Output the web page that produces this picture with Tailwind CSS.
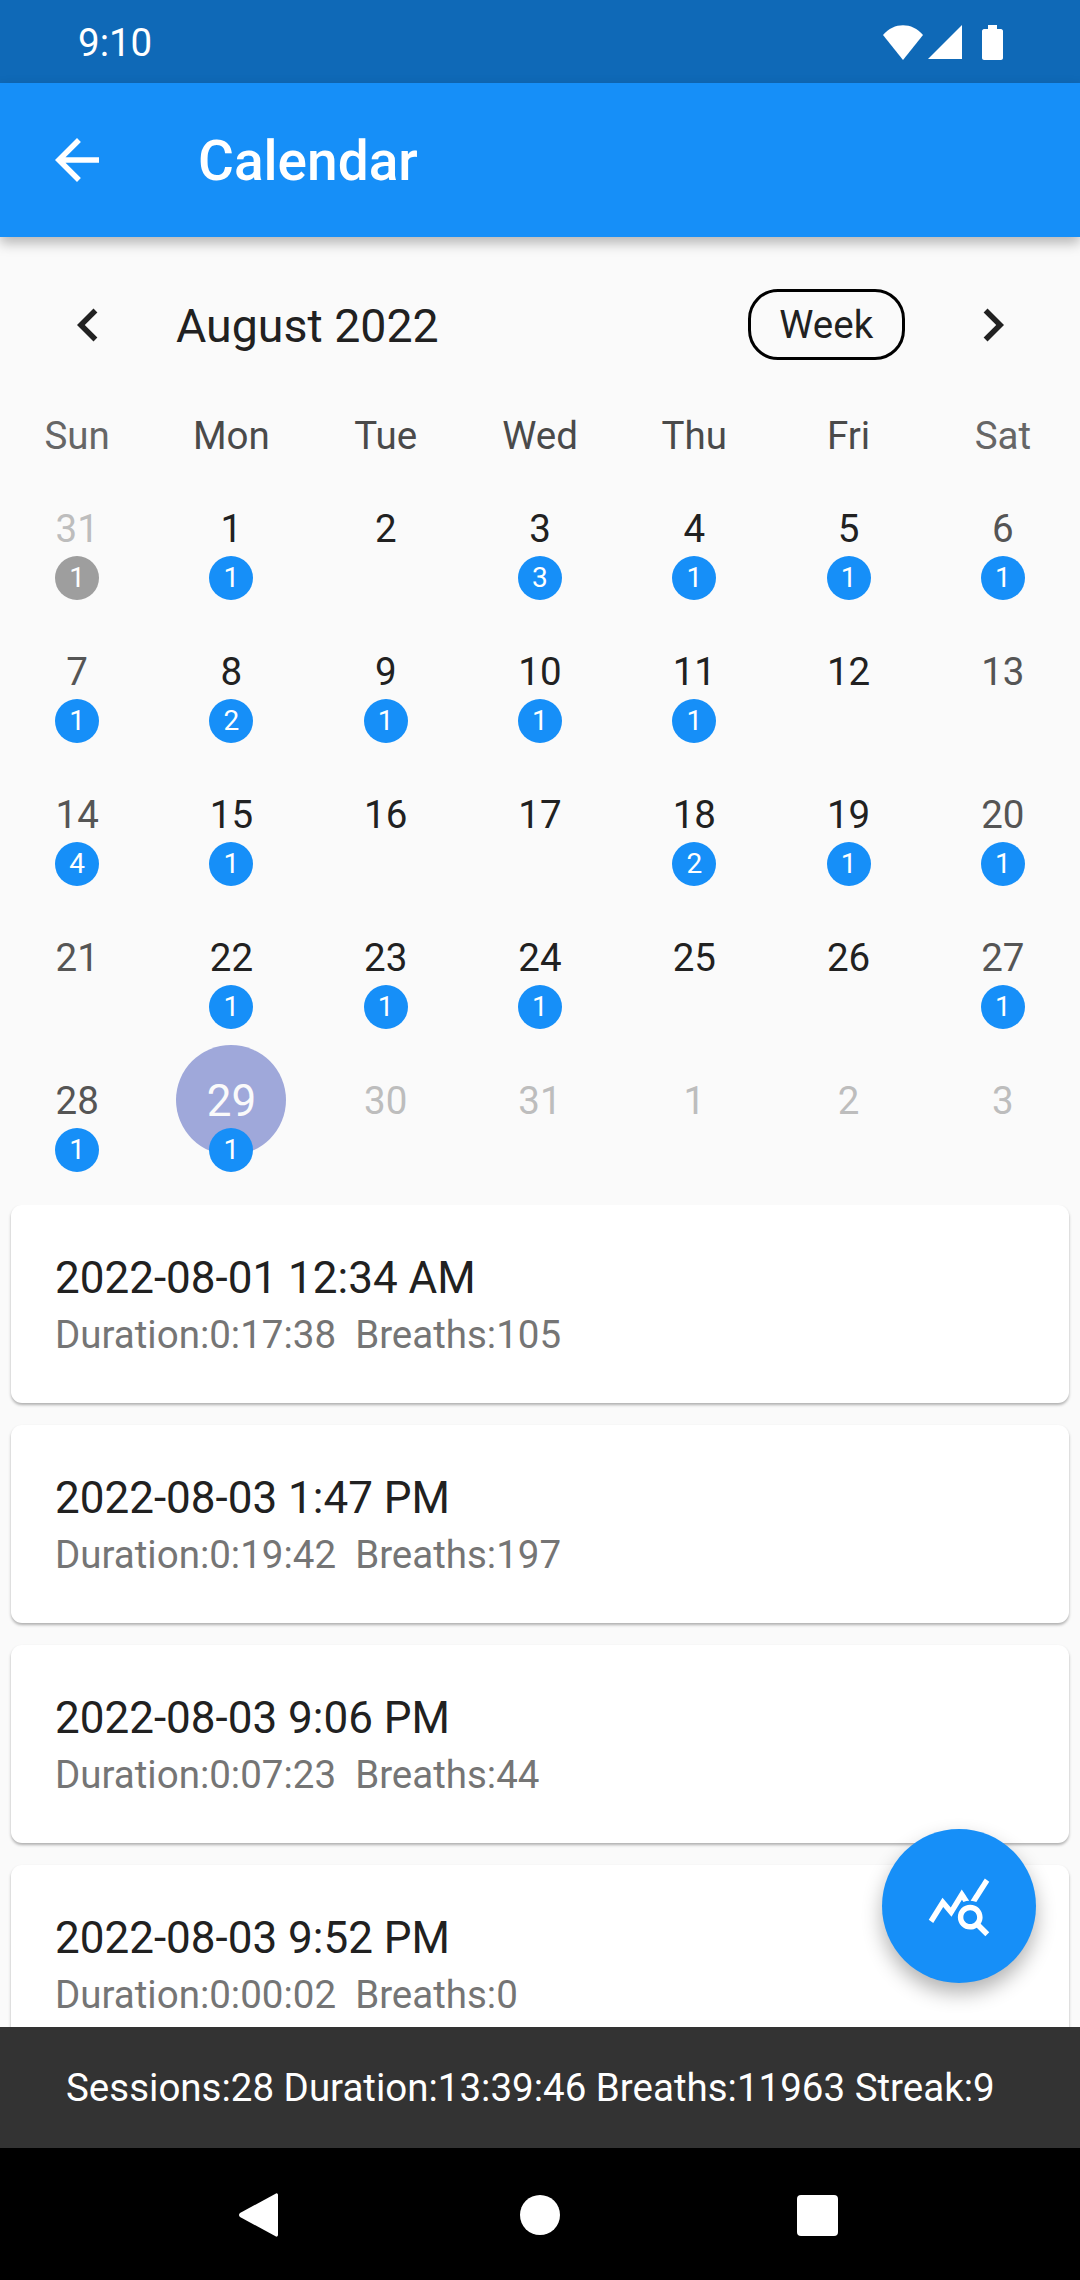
<!DOCTYPE html>
<html lang="en">
<head>
    <meta charset="UTF-8">
    <meta name="viewport" content="width=device-width, initial-scale=1.0">
    <title>Calendar</title>
    <script src="https://cdn.jsdelivr.net/npm/@tailwindcss/browser@4"></script>
</head>
<body class="bg-black">
    <div class="relative flex h-[2280px] w-[1080px] flex-col overflow-hidden bg-[#fafafa] font-[Roboto,sans-serif]">
        <!-- Status bar -->
        <div class="flex h-[83px] shrink-0 items-center justify-between bg-[#0f69b7] pl-[78px] pr-[77px] text-white">
            <span class="pt-[4px] text-[38.5px] leading-none">9:10</span>
            <div class="flex items-center gap-[5px] pt-[2px]">
                <svg width="40" height="35" viewBox="0 0 40 35" fill="white"><path d="M0 10C11 -3 29 -3 40 10L20 35Z"/></svg>
                <svg width="34" height="35" viewBox="0 0 34 35" fill="white"><path d="M34 0V34H0Z"/></svg>
                <svg class="ml-[15px]" width="21" height="35" viewBox="0 0 21 35" fill="white"><path d="M6 0H15V4H19C20 4 21 5 21 6V33C21 34 20 35 19 35H2C1 35 0 34 0 33V6C0 5 1 4 2 4H6Z"/></svg>
            </div>
        </div>

        <!-- App bar -->
        <div class="relative z-10 flex h-[154px] shrink-0 items-center bg-[#168ff8] pl-[44px] text-white shadow-[0_6px_12px_rgba(0,0,0,0.28)]">
            <svg width="66" height="66" viewBox="0 0 24 24" fill="white"><path d="M20 11H7.83l5.59-5.59L12 4l-8 8 8 8 1.41-1.41L7.83 13H20v-2z"/></svg>
            <h1 class="ml-[88px] pt-[3px] text-[55px] leading-none font-medium">Calendar</h1>
        </div>

        <!-- Month header -->
        <div class="mt-[53px] flex h-[70px] shrink-0 items-center pl-[55px] text-[#212121]">
            <svg width="66" height="66" viewBox="0 0 24 24" fill="#212121"><path d="M15.41 7.41L14 6l-6 6 6 6 1.41-1.41L10.83 12z"/></svg>
            <span class="ml-[55px] pt-[2px] text-[46.5px] leading-none">August 2022</span>
            <span class="ml-[309px] -mt-[1px] flex h-[71px] w-[157px] items-center justify-center rounded-[30px] border-[3px] border-black pt-[2px] text-[38.5px] leading-none">Week</span>
            <svg class="ml-[55px]" width="66" height="66" viewBox="0 0 24 24" fill="#212121"><path d="M8.59 16.59L10 18l6-6-6-6-1.41 1.41L13.17 12z"/></svg>
        </div>

        <!-- Weekdays -->
        <div class="mt-[39px] grid h-[74px] shrink-0 grid-cols-7 items-center text-center text-[38.5px] leading-none text-[#4a4a4a]">
            <span class="text-[#666666]">Sun</span><span>Mon</span><span>Tue</span><span>Wed</span><span>Thu</span><span>Fri</span><span class="text-[#666666]">Sat</span>
        </div>

        <!-- Days -->
        <div class="grid shrink-0 grid-cols-7 text-[38.5px] leading-none text-[#212121]">
            <div class="flex h-[143px] flex-col items-center"><span class="flex size-[110px] items-center justify-center pt-[2px] text-[#bdbdbd]">31</span><span class="-mt-[27px] flex size-[44px] items-center justify-center rounded-full bg-[#9e9e9e] text-[28px] text-white">1</span></div>
            <div class="flex h-[143px] flex-col items-center"><span class="flex size-[110px] items-center justify-center pt-[2px]">1</span><span class="-mt-[27px] flex size-[44px] items-center justify-center rounded-full bg-[#168ff8] text-[28px] text-white">1</span></div>
            <div class="flex h-[143px] flex-col items-center"><span class="flex size-[110px] items-center justify-center pt-[2px]">2</span></div>
            <div class="flex h-[143px] flex-col items-center"><span class="flex size-[110px] items-center justify-center pt-[2px]">3</span><span class="-mt-[27px] flex size-[44px] items-center justify-center rounded-full bg-[#168ff8] text-[28px] text-white">3</span></div>
            <div class="flex h-[143px] flex-col items-center"><span class="flex size-[110px] items-center justify-center pt-[2px]">4</span><span class="-mt-[27px] flex size-[44px] items-center justify-center rounded-full bg-[#168ff8] text-[28px] text-white">1</span></div>
            <div class="flex h-[143px] flex-col items-center"><span class="flex size-[110px] items-center justify-center pt-[2px]">5</span><span class="-mt-[27px] flex size-[44px] items-center justify-center rounded-full bg-[#168ff8] text-[28px] text-white">1</span></div>
            <div class="flex h-[143px] flex-col items-center"><span class="flex size-[110px] items-center justify-center pt-[2px] text-[#555555]">6</span><span class="-mt-[27px] flex size-[44px] items-center justify-center rounded-full bg-[#168ff8] text-[28px] text-white">1</span></div>

            <div class="flex h-[143px] flex-col items-center"><span class="flex size-[110px] items-center justify-center pt-[2px] text-[#555555]">7</span><span class="-mt-[27px] flex size-[44px] items-center justify-center rounded-full bg-[#168ff8] text-[28px] text-white">1</span></div>
            <div class="flex h-[143px] flex-col items-center"><span class="flex size-[110px] items-center justify-center pt-[2px]">8</span><span class="-mt-[27px] flex size-[44px] items-center justify-center rounded-full bg-[#168ff8] text-[28px] text-white">2</span></div>
            <div class="flex h-[143px] flex-col items-center"><span class="flex size-[110px] items-center justify-center pt-[2px]">9</span><span class="-mt-[27px] flex size-[44px] items-center justify-center rounded-full bg-[#168ff8] text-[28px] text-white">1</span></div>
            <div class="flex h-[143px] flex-col items-center"><span class="flex size-[110px] items-center justify-center pt-[2px]">10</span><span class="-mt-[27px] flex size-[44px] items-center justify-center rounded-full bg-[#168ff8] text-[28px] text-white">1</span></div>
            <div class="flex h-[143px] flex-col items-center"><span class="flex size-[110px] items-center justify-center pt-[2px]">11</span><span class="-mt-[27px] flex size-[44px] items-center justify-center rounded-full bg-[#168ff8] text-[28px] text-white">1</span></div>
            <div class="flex h-[143px] flex-col items-center"><span class="flex size-[110px] items-center justify-center pt-[2px]">12</span></div>
            <div class="flex h-[143px] flex-col items-center"><span class="flex size-[110px] items-center justify-center pt-[2px] text-[#555555]">13</span></div>

            <div class="flex h-[143px] flex-col items-center"><span class="flex size-[110px] items-center justify-center pt-[2px] text-[#555555]">14</span><span class="-mt-[27px] flex size-[44px] items-center justify-center rounded-full bg-[#168ff8] text-[28px] text-white">4</span></div>
            <div class="flex h-[143px] flex-col items-center"><span class="flex size-[110px] items-center justify-center pt-[2px]">15</span><span class="-mt-[27px] flex size-[44px] items-center justify-center rounded-full bg-[#168ff8] text-[28px] text-white">1</span></div>
            <div class="flex h-[143px] flex-col items-center"><span class="flex size-[110px] items-center justify-center pt-[2px]">16</span></div>
            <div class="flex h-[143px] flex-col items-center"><span class="flex size-[110px] items-center justify-center pt-[2px]">17</span></div>
            <div class="flex h-[143px] flex-col items-center"><span class="flex size-[110px] items-center justify-center pt-[2px]">18</span><span class="-mt-[27px] flex size-[44px] items-center justify-center rounded-full bg-[#168ff8] text-[28px] text-white">2</span></div>
            <div class="flex h-[143px] flex-col items-center"><span class="flex size-[110px] items-center justify-center pt-[2px]">19</span><span class="-mt-[27px] flex size-[44px] items-center justify-center rounded-full bg-[#168ff8] text-[28px] text-white">1</span></div>
            <div class="flex h-[143px] flex-col items-center"><span class="flex size-[110px] items-center justify-center pt-[2px] text-[#555555]">20</span><span class="-mt-[27px] flex size-[44px] items-center justify-center rounded-full bg-[#168ff8] text-[28px] text-white">1</span></div>

            <div class="flex h-[143px] flex-col items-center"><span class="flex size-[110px] items-center justify-center pt-[2px] text-[#555555]">21</span></div>
            <div class="flex h-[143px] flex-col items-center"><span class="flex size-[110px] items-center justify-center pt-[2px]">22</span><span class="-mt-[27px] flex size-[44px] items-center justify-center rounded-full bg-[#168ff8] text-[28px] text-white">1</span></div>
            <div class="flex h-[143px] flex-col items-center"><span class="flex size-[110px] items-center justify-center pt-[2px]">23</span><span class="-mt-[27px] flex size-[44px] items-center justify-center rounded-full bg-[#168ff8] text-[28px] text-white">1</span></div>
            <div class="flex h-[143px] flex-col items-center"><span class="flex size-[110px] items-center justify-center pt-[2px]">24</span><span class="-mt-[27px] flex size-[44px] items-center justify-center rounded-full bg-[#168ff8] text-[28px] text-white">1</span></div>
            <div class="flex h-[143px] flex-col items-center"><span class="flex size-[110px] items-center justify-center pt-[2px]">25</span></div>
            <div class="flex h-[143px] flex-col items-center"><span class="flex size-[110px] items-center justify-center pt-[2px]">26</span></div>
            <div class="flex h-[143px] flex-col items-center"><span class="flex size-[110px] items-center justify-center pt-[2px] text-[#555555]">27</span><span class="-mt-[27px] flex size-[44px] items-center justify-center rounded-full bg-[#168ff8] text-[28px] text-white">1</span></div>

            <div class="flex h-[143px] flex-col items-center"><span class="flex size-[110px] items-center justify-center pt-[2px] text-[#555555]">28</span><span class="-mt-[27px] flex size-[44px] items-center justify-center rounded-full bg-[#168ff8] text-[28px] text-white">1</span></div>
            <div class="flex h-[143px] flex-col items-center"><span class="flex size-[110px] items-center justify-center rounded-full bg-[#9fa8da] pt-[2px] text-[44px] text-[#fafafa]">29</span><span class="-mt-[27px] flex size-[44px] items-center justify-center rounded-full bg-[#168ff8] text-[28px] text-white">1</span></div>
            <div class="flex h-[143px] flex-col items-center"><span class="flex size-[110px] items-center justify-center pt-[2px] text-[#bdbdbd]">30</span></div>
            <div class="flex h-[143px] flex-col items-center"><span class="flex size-[110px] items-center justify-center pt-[2px] text-[#bdbdbd]">31</span></div>
            <div class="flex h-[143px] flex-col items-center"><span class="flex size-[110px] items-center justify-center pt-[2px] text-[#bdbdbd]">1</span></div>
            <div class="flex h-[143px] flex-col items-center"><span class="flex size-[110px] items-center justify-center pt-[2px] text-[#bdbdbd]">2</span></div>
            <div class="flex h-[143px] flex-col items-center"><span class="flex size-[110px] items-center justify-center pt-[2px] text-[#bdbdbd]">3</span></div>
        </div>

        <!-- Session list -->
        <div class="mt-[17px] flex min-h-0 flex-1 flex-col gap-[22px] overflow-hidden px-[11px]">
            <div class="flex h-[198px] shrink-0 flex-col rounded-[11px] bg-white pl-[44px] pt-[51px] shadow-[0_2px_3px_rgba(0,0,0,0.3)]">
                <p class="text-[44px] leading-[44px] text-[#212121]">2022-08-01 12:34 AM</p>
                <p class="mt-[13px] text-[38.5px] leading-[44px] whitespace-pre text-[#757575]">Duration:0:17:38  Breaths:105</p>
            </div>
            <div class="flex h-[198px] shrink-0 flex-col rounded-[11px] bg-white pl-[44px] pt-[51px] shadow-[0_2px_3px_rgba(0,0,0,0.3)]">
                <p class="text-[44px] leading-[44px] text-[#212121]">2022-08-03 1:47 PM</p>
                <p class="mt-[13px] text-[38.5px] leading-[44px] whitespace-pre text-[#757575]">Duration:0:19:42  Breaths:197</p>
            </div>
            <div class="flex h-[198px] shrink-0 flex-col rounded-[11px] bg-white pl-[44px] pt-[51px] shadow-[0_2px_3px_rgba(0,0,0,0.3)]">
                <p class="text-[44px] leading-[44px] text-[#212121]">2022-08-03 9:06 PM</p>
                <p class="mt-[13px] text-[38.5px] leading-[44px] whitespace-pre text-[#757575]">Duration:0:07:23  Breaths:44</p>
            </div>
            <div class="flex h-[198px] shrink-0 flex-col rounded-[11px] bg-white pl-[44px] pt-[51px] shadow-[0_2px_3px_rgba(0,0,0,0.3)]">
                <p class="text-[44px] leading-[44px] text-[#212121]">2022-08-03 9:52 PM</p>
                <p class="mt-[13px] text-[38.5px] leading-[44px] whitespace-pre text-[#757575]">Duration:0:00:02  Breaths:0</p>
            </div>
        </div>

        <!-- Floating action button -->
        <button class="absolute left-[882px] top-[1829px] flex size-[154px] items-center justify-center rounded-full bg-[#168ff8] shadow-[0_10px_20px_rgba(0,0,0,0.3)]">
            <svg width="66" height="66" viewBox="0 0 24 24" fill="white"><path d="M19.88,18.47c0.44-0.7,0.7-1.51,0.7-2.39c0-2.49-2.01-4.5-4.5-4.5s-4.5,2.01-4.5,4.5s2.01,4.5,4.49,4.5c0.88,0,1.7-0.26,2.39-0.7L21.58,23L23,21.58L19.88,18.47z M16.08,18.58c-1.38,0-2.5-1.12-2.5-2.5c0-1.38,1.12-2.5,2.5-2.5s2.5,1.12,2.5,2.5C18.58,17.46,17.46,18.58,16.08,18.58z M15.72,10.08c-0.74,0.02-1.45,0.18-2.1,0.45l-0.55-0.83l-3.8,6.18l-3.01-3.52l-3.63,5.81L1,17l5-8l3,3.5L13,6C13,6,15.72,10.08,15.72,10.08z M18.31,10.58c-0.64-0.28-1.33-0.45-2.05-0.49c0,0,5.13-8.09,5.13-8.09L23,3.18L18.31,10.58z"/></svg>
        </button>

        <!-- Totals bar -->
        <div class="relative z-10 flex h-[121px] shrink-0 items-center bg-[#333333] pl-[66px] pt-[2px] text-[38.5px] leading-none text-white">
            Sessions:28 Duration:13:39:46 Breaths:11963 Streak:9
        </div>

        <!-- Android nav bar -->
        <div class="relative z-10 flex h-[132px] shrink-0 items-center bg-black pl-[239px] pt-[2px]">
            <svg width="39" height="44" viewBox="0 0 39 44" fill="white"><path d="M37 0.5C38 0 39 1 39 2V42C39 43 38 44 37 43.5L1 24C-0.3 23 -0.3 21 1 20Z"/></svg>
            <span class="ml-[242px] size-[40px] rounded-full bg-white"></span>
            <span class="ml-[237px] size-[41px] rounded-[4px] bg-white"></span>
        </div>
    </div>
</body>
</html>
